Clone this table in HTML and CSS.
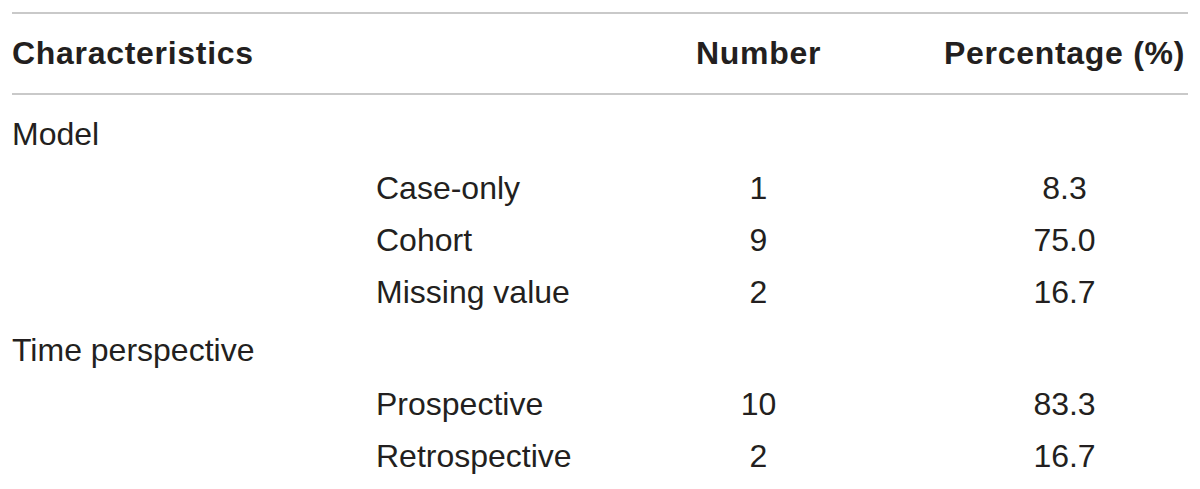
FILE: index.html
```html
<!DOCTYPE html>
<html lang="en">
<head>
<meta charset="utf-8">
<title>Characteristics</title>
<link rel="stylesheet" href="styles.css">
</head>
<body>
<table class="stats">
  <colgroup>
    <col class="c-label">
    <col class="c-sub">
    <col class="c-num">
    <col class="c-pct">
  </colgroup>
  <thead>
    <tr>
      <th class="left" colspan="2">Characteristics</th>
      <th class="center">Number</th>
      <th class="center">Percentage (%)</th>
    </tr>
  </thead>
  <tbody>
    <tr class="group first">
      <td colspan="4">Model</td>
    </tr>
    <tr class="sub">
      <td></td>
      <td>Case-only</td>
      <td class="center">1</td>
      <td class="center">8.3</td>
    </tr>
    <tr class="sub">
      <td></td>
      <td>Cohort</td>
      <td class="center">9</td>
      <td class="center">75.0</td>
    </tr>
    <tr class="sub">
      <td></td>
      <td>Missing value</td>
      <td class="center">2</td>
      <td class="center">16.7</td>
    </tr>
    <tr class="group">
      <td colspan="4">Time perspective</td>
    </tr>
    <tr class="sub">
      <td></td>
      <td>Prospective</td>
      <td class="center">10</td>
      <td class="center">83.3</td>
    </tr>
    <tr class="sub">
      <td></td>
      <td>Retrospective</td>
      <td class="center">2</td>
      <td class="center">16.7</td>
    </tr>
  </tbody>
</table>
</body>
</html>
```

FILE: styles.css
```css
html, body {
  margin: 0;
  padding: 0;
  background: #ffffff;
}

body {
  font-family: "Liberation Sans", Arial, Helvetica, sans-serif;
  color: #231f20;
}

.stats {
  table-layout: fixed;
  width: 1176px;
  margin: 12px 12px 0 12px;
  border-collapse: separate;
  border-spacing: 0;
  font-size: 32px;
  line-height: 36px;
}

.c-label { width: 364px; }
.c-sub { width: 200px; }
.c-num { width: 365px; }
.c-pct { width: 247px; }

.stats th,
.stats td {
  padding: 0;
  white-space: nowrap;
  vertical-align: top;
}

.stats th {
  font-weight: bold;
  letter-spacing: 0.7px;
  padding-top: 21px;
  padding-bottom: 22px;
  border-top: 2px solid #c9c9c9;
  border-bottom: 2px solid #c9c9c9;
}

.left { text-align: left; }
.center { text-align: center; }

.stats td {
  font-weight: normal;
  text-align: left;
}

.stats td.center { text-align: center; }

.sub td {
  padding-top: 8px;
  padding-bottom: 8px;
}

.group td {
  padding-top: 14px;
  padding-bottom: 10px;
}

.group.first td {
  padding-top: 21px;
}
```
